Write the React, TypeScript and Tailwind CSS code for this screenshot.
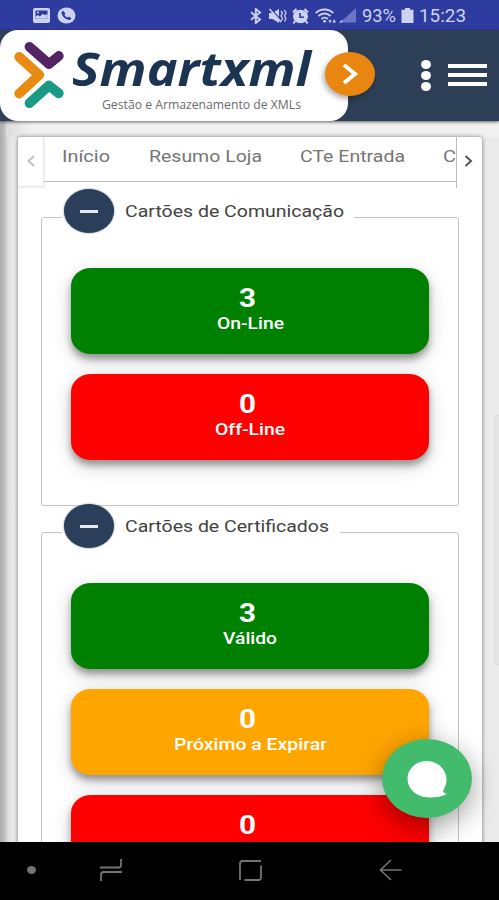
import { useLayoutEffect, useRef } from "react";
import type { ReactNode } from "react";

const ROBOTO = "font-[Roboto,'Liberation_Sans',sans-serif]";

/** Single line of text stretched horizontally to fill the width of its box. */
function Fit({ className, children }: { className: string; children: ReactNode }) {
  const box = useRef<HTMLSpanElement>(null);
  const line = useRef<HTMLSpanElement>(null);
  useLayoutEffect(() => {
    if (box.current && line.current) {
      const k = box.current.offsetWidth / line.current.getBoundingClientRect().width;
      line.current.style.transform = `scaleX(${k})`;
    }
  }, []);
  return (
    <span className={`block shrink-0 whitespace-nowrap leading-none ${className}`}>
      <span ref={box} className="block w-full">
        <span ref={line} className="inline-block origin-left">
          {children}
        </span>
      </span>
    </span>
  );
}

function StatusBar() {
  return (
    <div className="flex h-[30px] shrink-0 items-center bg-[#2f3c9f] pt-px pl-[33px] text-[#cdd1f2]">
      <svg width="17" height="15" viewBox="0 0 17 15">
        <rect width="17" height="15" rx="2" fill="currentColor" />
        <path d="M2.500 2.500h12v8h-12z" fill="#2f3c9f" />
        <path d="M2.500 10.500V8.500l2.500-1.500 2 1.500 2.500-2.500 2.500 1 2.500-1v4.500z" fill="currentColor" />
        <circle cx="5" cy="4.500" r="1.100" fill="currentColor" />
      </svg>
      <svg className="ml-[7px]" width="19" height="17" viewBox="0 0 19 17">
        <ellipse cx="9.500" cy="8.500" rx="9" ry="8" fill="currentColor" />
        <path
          d="M6 3.800 4.500 5c0 4 4 7.700 8.500 8l1.500-1.600-2.600-1.900-1.500 1C9 9.900 7.900 8.900 7.400 7.700l1-1.300z"
          fill="#2f3c9f"
        />
      </svg>
      <svg className="ml-[174px]" width="12" height="16" viewBox="0 0 12 16" fill="none" stroke="currentColor" strokeWidth="1.900">
        <path d="M1 4.200 10 11.500 5.800 15V1L10 4.500 1 11.800" />
      </svg>
      <svg className="ml-[6px]" width="19" height="16" viewBox="0 0 19 16">
        <path d="M1 5h3.500L11 1v14l-6.500-4H1z" fill="currentColor" />
        <path d="M2.500.5 13.500 12.500" stroke="#2f3c9f" strokeWidth="1.200" />
        <path d="M1.500 1 13 14" stroke="currentColor" strokeWidth="1.500" />
        <path d="M13 3l1.500 2L13 8l1.500 2.500L13 13M16.500 2l1.500 3-1.500 3 1.500 2.500-1.500 3" fill="none" stroke="currentColor" strokeWidth="1.300" />
      </svg>
      <svg className="ml-[5px]" width="17" height="16" viewBox="0 0 17 16">
        <path d="M1 4.500 4.500 1M16 4.500 12.500 1" stroke="currentColor" strokeWidth="2.200" />
        <ellipse cx="8.500" cy="8.500" rx="7.500" ry="6.800" fill="currentColor" />
        <path d="M8 5v4.200h4" fill="none" stroke="#2f3c9f" strokeWidth="1.600" />
        <path d="m3 13-1.500 2.500M14 13l1.500 2.500" stroke="currentColor" strokeWidth="2" />
      </svg>
      <svg className="ml-[6px]" width="22" height="16" viewBox="0 0 22 16" fill="none" stroke="currentColor" strokeWidth="1.900">
        <path d="M.8 5C5.500.3 13.500.3 18.200 5M3.500 8c3.500-3.400 8.500-3.400 12 0M6.500 11c2-1.900 4.500-1.900 6.300 0" />
        <circle cx="9.600" cy="13.300" r="1.400" fill="currentColor" stroke="none" />
        <path d="M13.500 12h3l-1.500 3.500zM17.500 14.500h3.500L19.200 11z" fill="currentColor" stroke="none" />
      </svg>
      <svg className="ml-[2px]" width="17" height="15" viewBox="0 0 17 15">
        <path d="M17 0v14.500H4V12z" fill="#6d76c4" />
        <path d="M0 14.500h3.500v-3z" fill="currentColor" />
      </svg>
      <Fit className={`ml-[6px] w-[34px] text-[18px] ${ROBOTO}`}>93%</Fit>
      <svg className="ml-[5px]" width="13" height="15" viewBox="0 0 13 15">
        <path d="M4 0h5v1.800h3.500V15H.5V1.800H4z" fill="currentColor" />
      </svg>
      <Fit className={`ml-[5px] w-[47px] text-[18px] ${ROBOTO}`}>15:23</Fit>
    </div>
  );
}

function LogoMark() {
  return (
    <svg width="50" height="67" viewBox="0 0 50 67" fill="none" strokeLinecap="round" strokeLinejoin="round" strokeWidth="9.800">
      <path d="M15.500 5.800 35 23l9.800-8" stroke="#532565" />
      <path d="m5.200 16 20 18-20 18.500" stroke="#e98b13" />
      <path d="M15.500 62.200 35 44.500l9.800 7.800" stroke="#1a9a85" />
    </svg>
  );
}

function Header() {
  return (
    <header className="relative z-10 flex h-[91px] shrink-0 items-center bg-[#2c3f56] shadow-[0_1px_3px_rgba(0,0,0,0.6)]">
      <div className="flex h-full w-[348px] items-start rounded-[18px] bg-white pl-[14px]">
        <div className="pt-[11px]">
          <LogoMark />
        </div>
        <div className="flex flex-col pl-[8px]">
          <Fit className="mt-[15px] h-[46px] w-[239px] text-[47px] font-bold italic text-[#1b3451] font-['Open_Sans',sans-serif]">
            Smartxml
          </Fit>
          <Fit className="mt-[8px] ml-[30px] w-[199px] text-[12.500px] text-[#6b6b6b] font-['Open_Sans',sans-serif]">
            Gestão e Armazenamento de XMLs
          </Fit>
        </div>
      </div>
      <button className="-ml-[23px] mb-[4px] flex h-[44px] w-[50px] items-center justify-center rounded-[50%] bg-[#e8860f] shadow-[-2px_3px_5px_rgba(0,0,0,0.3)]">
        <svg width="18" height="24" viewBox="0 0 18 24" fill="none" stroke="#fff" strokeWidth="4">
          <path d="m3 3 11 9-11 9" />
        </svg>
      </button>
      <div className="ml-[46px] flex w-[11px] flex-col gap-[2px]">
        <i className="h-[9px] w-[10px] rounded-[50%] bg-white" />
        <i className="h-[9px] w-[10px] rounded-[50%] bg-white" />
        <i className="h-[9px] w-[10px] rounded-[50%] bg-white" />
      </div>
      <div className="mb-[2px] ml-[16px] flex w-[39px] flex-col gap-[5px]">
        <i className="h-[4px] bg-white" />
        <i className="h-[4px] bg-white" />
        <i className="h-[4px] bg-white" />
      </div>
    </header>
  );
}

function Tabs() {
  return (
    <div className={`flex h-[51px] text-[17px] text-[#757575] ${ROBOTO}`}>
      <button className="flex h-[50px] w-[26px] items-center justify-center border-r border-b border-[#e6e6e6] pb-[2px] shadow-[1px_1px_2px_rgba(0,0,0,0.06)]">
        <svg width="8" height="12" viewBox="0 0 8 12" fill="none" stroke="#bdbdbd" strokeWidth="1.700">
          <path d="M7 1 1.500 6 7 11" />
        </svg>
      </button>
      <div className="flex h-[45px] w-[412px] overflow-hidden border-b-[1.500px] border-[#bdbdbd] pt-[11px] pl-[18px]">
        <Fit className="w-[48px]">Início</Fit>
        <Fit className="ml-[39px] w-[113px]">Resumo Loja</Fit>
        <Fit className="ml-[38px] w-[105px]">CTe Entrada</Fit>
        <Fit className="ml-[38px] w-[13px]">C</Fit>
      </div>
      <button className="flex w-[26px] items-center justify-center border-l border-[#bdbdbd] pr-[3px] pb-[3px]">
        <svg width="9" height="12" viewBox="0 0 9 12" fill="none" stroke="#555" strokeWidth="2">
          <path d="m1.500 1 5.500 5-5.500 5" />
        </svg>
      </button>
    </div>
  );
}

function Card({ color, value, label, width }: { color: string; value: string; label?: string; width?: string }) {
  return (
    <div
      className={`flex h-[86px] w-[358px] flex-col items-center rounded-[20px/18px] pt-[18px] text-white shadow-[0_5px_7px_rgba(0,0,0,0.35),0_6px_20px_rgba(0,0,0,0.17)] ${color} ${ROBOTO}`}
    >
      <Fit className="mr-[5px] w-[17px] text-[25px] font-bold">{value}</Fit>
      {label && <Fit className={`mt-[4px] text-[17px] font-medium ${width}`}>{label}</Fit>}
    </div>
  );
}

function Group({ title, legend, text, height, children }: { title: string; legend: string; text: string; height: string; children: ReactNode }) {
  return (
    <fieldset className={`ml-[23px] w-[418px] rounded-[3px] border border-[#c4c4c4] pl-[29px] ${height}`}>
      <legend className={`-ml-[9px] flex h-[56px] items-start pl-[2px] ${legend}`}>
        <button className="flex h-[44px] w-[50px] shrink-0 items-center justify-center rounded-[50%] bg-[#2c3f5a] shadow-[0_0_2px_#5c7291]">
          <i className="h-[3px] w-[18px] bg-[#e4eaf2]" />
        </button>
        <Fit className={`mt-[14px] ml-[11px] text-[17px] text-[#424242] ${text} ${ROBOTO}`}>{title}</Fit>
      </legend>
      <div className="flex flex-col gap-[20px] pt-[23px]">{children}</div>
    </fieldset>
  );
}

function ChatButton() {
  return (
    <button className="absolute top-[618px] left-[382px] flex h-[79px] w-[90px] items-center justify-center rounded-[50%] bg-[#43bb6c] shadow-[0_8px_28px_rgba(0,0,0,0.4)]">
      <svg width="40" height="38" viewBox="0 0 40 38" fill="#fff">
        <path d="M19.500 1C9 1 .5 9 .5 18.800S9 37 20 37.300c7 .4 14-.3 20-3.300-2 0-3-1-4-3.300C38.500 27 39.500 23 39.500 19 39 9 30.500 1 19.500 1z" />
      </svg>
    </button>
  );
}

function NavBar() {
  return (
    <nav className="z-10 flex h-[58px] shrink-0 items-center bg-black pb-[2px] pl-[27px] text-[#747474]">
      <i className="h-[8px] w-[9px] rounded-[50%] bg-current" />
      <svg className="ml-[64px]" width="22" height="22" viewBox="0 0 22 22" fill="none" stroke="currentColor" strokeWidth="1.800">
        <path d="M0 8.500h18.500Q21 8.500 21 6V0M1 22v-6.500Q1 13 3.500 13H22" />
      </svg>
      <svg className="ml-[117px]" width="23" height="21" viewBox="0 0 23 21" fill="none" stroke="currentColor" strokeWidth="1.800">
        <path d="M1 20V3.500Q1 1 3.500 1H22M22 5.500v12Q22 20 19.500 20H5.500" />
      </svg>
      <svg className="ml-[117px]" width="23" height="22" viewBox="0 0 23 22" fill="none" stroke="currentColor" strokeWidth="1.600">
        <path d="M22.500 11H1.500M12 1 1.500 11 12 21" />
      </svg>
    </nav>
  );
}

export default function App() {
  return (
    <div className="flex h-[900px] w-[499px] flex-col overflow-hidden">
      <StatusBar />
      <Header />
      <main className="relative h-[721px] overflow-hidden bg-[linear-gradient(90deg,#adadad_0px,#bcbcbc_4px,#dedede_8px,#ebebeb_13px,#ebebeb_100%)] pt-[16px] pl-[18px]">
        <div className="absolute top-0 right-0 left-[6px] h-[16px] bg-linear-to-r from-[#dadada] via-[#f1f1f1] via-5% to-[#f1f1f1]" />
        <div className="absolute top-[294px] -right-[4px] h-[250px] w-[9px] rounded-[4px] border border-[#dadada] bg-[#e6e6e6]" />
        <section className="relative h-[760px] w-[464px] rounded-[3px] bg-white shadow-[0_0_4px_rgba(0,0,0,0.5)]">
          <Tabs />
          <div className="mt-px">
            <Group title="Cartões de Comunicação" legend="w-[292px]" text="w-[219px]" height="h-[317px]">
              <Card color="bg-[#008000]" value="3" label="On-Line" width="w-[67px]" />
              <Card color="bg-[#ff0000]" value="0" label="Off-Line" width="w-[70px]" />
            </Group>
          </div>
          <div className="-mt-[2px]">
            <Group title="Cartões de Certificados" legend="w-[278px]" text="w-[204px]" height="h-[420px]">
              <Card color="bg-[#008000]" value="3" label="Válido" width="w-[54px]" />
              <Card color="bg-[#ffa500]" value="0" label="Próximo a Expirar" width="w-[153px]" />
              <Card color="bg-[#ff0000]" value="0" />
            </Group>
          </div>
        </section>
        <ChatButton />
      </main>
      <NavBar />
    </div>
  );
}
